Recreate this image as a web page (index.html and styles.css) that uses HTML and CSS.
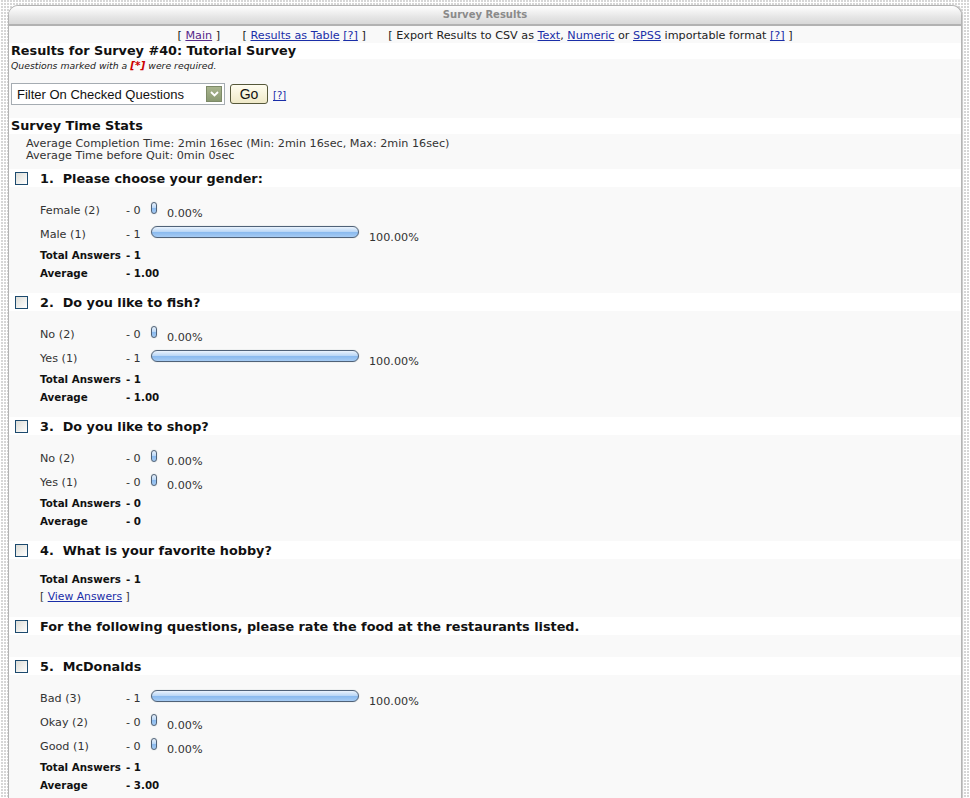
FILE: index.html
```html
<!DOCTYPE html>
<html>
<head>
<meta charset="utf-8">
<title>Survey Results</title>
<link rel="stylesheet" href="styles.css">
</head>
<body>
<div class="page">
  <div class="panel">
    <div class="panel-head">Survey Results</div>
    <div class="panel-body">
      <div class="links">
        [ <a class="visited" href="#">Main</a> ]
        <span class="sp"></span>[ <a href="#">Results as Table</a> <a href="#">[?]</a> ]
        <span class="sp"></span>[ Export Results to CSV as <a href="#">Text</a>, <a href="#">Numeric</a> or <a href="#">SPSS</a> importable format <a href="#">[?]</a> ]
      </div>
      <div class="title-row">Results for Survey #40: Tutorial Survey</div>
      <div class="note">Questions marked with a <b>[*]</b> were required.</div>
      <div class="filter">
        <div class="select"><span class="select-text">Filter On Checked Questions</span><span class="select-btn"><svg width="9" height="6" viewBox="0 0 9 6"><path d="M1 1 L4.5 4.5 L8 1" fill="none" stroke="#fff" stroke-width="1.8"/></svg></span></div>
        <button class="go" type="button">Go</button>
        <a class="help" href="#">[?]</a>
      </div>
      <div class="section-row">Survey Time Stats</div>
      <div class="stats">
        <div>Average Completion Time: 2min 16sec (Min: 2min 16sec, Max: 2min 16sec)</div>
        <div>Average Time before Quit: 0min 0sec</div>
      </div>

      <div class="q">
        <div class="q-head"><span class="cb"></span><span>1.&nbsp; Please choose your gender:</span></div>
        <div class="q-body">
          <div class="opt"><span class="lbl">Female (2)</span><span class="cnt">- 0</span><span class="bar zero"></span><span class="pct">0.00%</span></div>
          <div class="opt"><span class="lbl">Male (1)</span><span class="cnt">- 1</span><span class="bar" style="width:208px"></span><span class="pct">100.00%</span></div>
          <div class="stat"><span class="lbl">Total Answers</span><span class="cnt">- 1</span></div>
          <div class="stat"><span class="lbl">Average</span><span class="cnt">- 1.00</span></div>
        </div>
      </div>

      <div class="q">
        <div class="q-head"><span class="cb"></span><span>2.&nbsp; Do you like to fish?</span></div>
        <div class="q-body">
          <div class="opt"><span class="lbl">No (2)</span><span class="cnt">- 0</span><span class="bar zero"></span><span class="pct">0.00%</span></div>
          <div class="opt"><span class="lbl">Yes (1)</span><span class="cnt">- 1</span><span class="bar" style="width:208px"></span><span class="pct">100.00%</span></div>
          <div class="stat"><span class="lbl">Total Answers</span><span class="cnt">- 1</span></div>
          <div class="stat"><span class="lbl">Average</span><span class="cnt">- 1.00</span></div>
        </div>
      </div>

      <div class="q">
        <div class="q-head"><span class="cb"></span><span>3.&nbsp; Do you like to shop?</span></div>
        <div class="q-body">
          <div class="opt"><span class="lbl">No (2)</span><span class="cnt">- 0</span><span class="bar zero"></span><span class="pct">0.00%</span></div>
          <div class="opt"><span class="lbl">Yes (1)</span><span class="cnt">- 0</span><span class="bar zero"></span><span class="pct">0.00%</span></div>
          <div class="stat"><span class="lbl">Total Answers</span><span class="cnt">- 0</span></div>
          <div class="stat"><span class="lbl">Average</span><span class="cnt">- 0</span></div>
        </div>
      </div>

      <div class="q">
        <div class="q-head"><span class="cb"></span><span>4.&nbsp; What is your favorite hobby?</span></div>
        <div class="q-body">
          <div class="stat"><span class="lbl">Total Answers</span><span class="cnt">- 1</span></div>
          <div class="view">[ <a href="#">View Answers</a> ]</div>
        </div>
      </div>

      <div class="q">
        <div class="q-head"><span class="cb"></span><span>For the following questions, please rate the food at the restaurants listed.</span></div>
        <div class="q-body"></div>
      </div>

      <div class="q">
        <div class="q-head"><span class="cb"></span><span>5.&nbsp; McDonalds</span></div>
        <div class="q-body">
          <div class="opt"><span class="lbl">Bad (3)</span><span class="cnt">- 1</span><span class="bar" style="width:208px"></span><span class="pct">100.00%</span></div>
          <div class="opt"><span class="lbl">Okay (2)</span><span class="cnt">- 0</span><span class="bar zero"></span><span class="pct">0.00%</span></div>
          <div class="opt"><span class="lbl">Good (1)</span><span class="cnt">- 0</span><span class="bar zero"></span><span class="pct">0.00%</span></div>
          <div class="stat"><span class="lbl">Total Answers</span><span class="cnt">- 1</span></div>
          <div class="stat"><span class="lbl">Average</span><span class="cnt">- 3.00</span></div>
        </div>
      </div>
    </div>
  </div>
</div>
</body>
</html>
```

FILE: styles.css
```css
html, body {
  margin: 0;
  padding: 0;
}
body {
  font-family: "DejaVu Sans", Verdana, sans-serif;
  color: #222;
  background-color: #d6d6d6;
  background-image:
    repeating-linear-gradient(90deg, #ffffff 0 1px, transparent 1px 3px),
    repeating-linear-gradient(0deg, #ffffff 0 1px, transparent 1px 3px);
  height: 798px;
  overflow: hidden;
}
.page {
  padding: 5px 8px 0 8px;
}
.panel {
  background: #f9f9f9;
  border: 1px solid #b4b4b4;
  border-bottom: none;
  border-radius: 10px 10px 0 0;
  box-shadow: 1px 0 1px #c8c8c8;
  height: 800px;
  overflow: hidden;
}
.panel-head {
  height: 18px;
  line-height: 18px;
  text-align: center;
  font-size: 10px;
  font-weight: bold;
  color: #8a8a8a;
  background: linear-gradient(#ffffff, #e6e6e6 60%, #d8d8d8);
  border-bottom: 2px solid #b2b2b2;
}
.panel-body {
  padding-top: 3px;
}
a {
  color: #1a2ea8;
  text-decoration: underline;
}
a.visited {
  color: #55288a;
}
.links {
  height: 14px;
  line-height: 14px;
  font-size: 11.2px;
  text-align: center;
  color: #222;
  white-space: nowrap;
}
.sp {
  display: inline-block;
  width: 19px;
}
.title-row {
  background: #fff;
  height: 16px;
  line-height: 16px;
  padding-left: 2px;
  font-size: 12.8px;
  font-weight: bold;
  color: #111;
}
.note {
  height: 12px;
  line-height: 12px;
  padding-left: 2px;
  font-size: 9.3px;
  font-style: italic;
  color: #222;
}
.note b {
  color: #c00;
  font-size: 10.5px;
}
.filter {
  display: flex;
  align-items: center;
  margin-top: 12px;
  padding-left: 2px;
  height: 22px;
}
.select {
  width: 212px;
  height: 20px;
  border: 1px solid #a5acb2;
  background: #fff;
  display: flex;
  align-items: center;
  justify-content: space-between;
  font-family: "Liberation Sans", Arial, sans-serif;
  font-size: 13px;
  color: #111;
}
.select-text {
  padding-left: 5px;
}
.select-btn {
  width: 16px;
  height: 16px;
  margin-right: 2px;
  background: linear-gradient(#a8b48e, #8a9a72);
  border: 1px solid #7d8a68;
  box-sizing: border-box;
  display: flex;
  align-items: center;
  justify-content: center;
}
.go {
  margin-left: 5px;
  width: 38px;
  height: 20px;
  padding: 0;
  font-family: "Liberation Sans", Arial, sans-serif;
  font-size: 14px;
  color: #111;
  background: linear-gradient(#fffdf0, #efe9c8);
  border: 1px solid #56583a;
  border-radius: 3px;
}
.help {
  margin-left: 5px;
  font-size: 10px;
  padding-top: 3px;
}
.section-row {
  margin-top: 13px;
  background: #fff;
  height: 16px;
  line-height: 16px;
  padding-left: 2px;
  font-size: 12.8px;
  font-weight: bold;
  color: #111;
}
.stats {
  padding: 4px 0 7px 17px;
  font-size: 11.2px;
  line-height: 12px;
  color: #333;
}
.q-head {
  background: #fff;
  height: 18px;
  display: flex;
  align-items: center;
  font-size: 12.8px;
  font-weight: bold;
  color: #111;
  white-space: nowrap;
}
.cb {
  width: 11px;
  height: 11px;
  margin: 0 12px 0 6px;
  border: 1px solid #1c4a6e;
  background: linear-gradient(135deg, #dcdcd6, #ffffff);
  flex: none;
}
.q-body {
  padding: 11px 0 11px 31px;
  font-size: 11.2px;
  color: #333;
}
.opt {
  height: 24px;
  display: flex;
  align-items: center;
  white-space: nowrap;
}
.stat {
  height: 18px;
  display: flex;
  align-items: center;
  font-weight: bold;
  font-size: 10.3px;
  color: #111;
  white-space: nowrap;
}
.lbl {
  width: 86px;
  flex: none;
}
.cnt {
  width: 25px;
  flex: none;
}
.bar {
  display: block;
  box-sizing: border-box;
  height: 12px;
  border: 1px solid #506278;
  border-radius: 6px;
  background: linear-gradient(#eaf3fd, #bcd8f6 45%, #8bbbef 55%, #a6cbf3);
  box-shadow: 0 0 1px #9aa;
  margin-top: -4px;
}
.bar.zero {
  width: 6px;
  height: 12px;
  border-radius: 3px;
}
.pct {
  margin-left: 10px;
  padding-top: 6px;
}
.view {
  height: 18px;
  line-height: 18px;
  font-size: 10.8px;
  color: #333;
}
```
